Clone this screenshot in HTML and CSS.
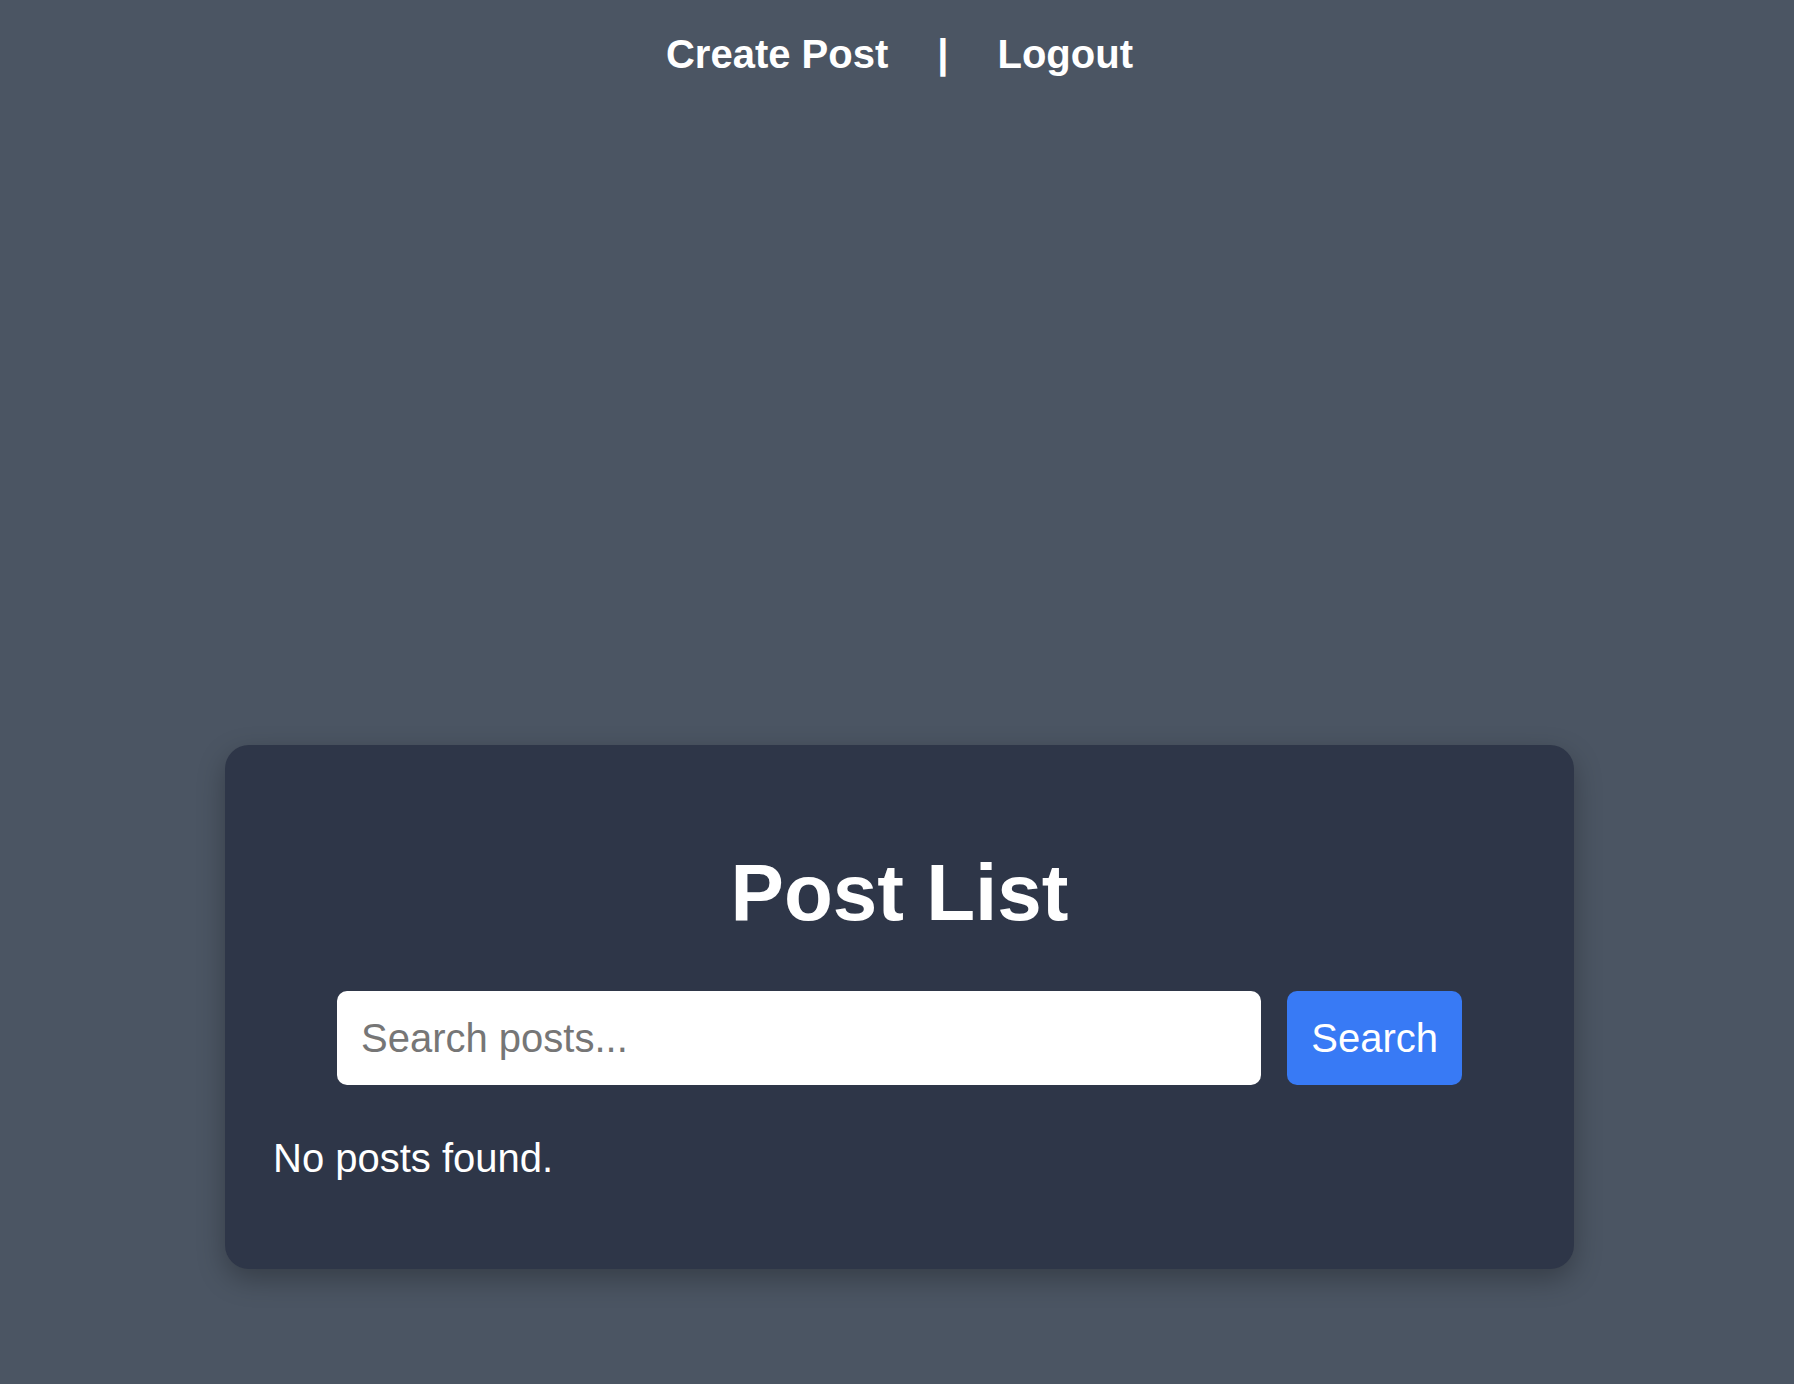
FILE: index.html
```html
<!DOCTYPE html>
<html lang="en">
<head>
<meta charset="utf-8">
<title>Post List</title>
<link rel="stylesheet" href="styles.css">
</head>
<body>
  <nav class="topnav">
    <a href="#" class="navlink">Create Post</a>
    <span class="sep">|</span>
    <a href="#" class="navlink">Logout</a>
  </nav>
  <main class="main">
    <section class="card">
      <h1 class="title">Post List</h1>
      <form class="search" onsubmit="return false;">
        <input class="search-input" type="text" placeholder="Search posts...">
        <button class="search-btn" type="submit">Search</button>
      </form>
      <p class="empty">No posts found.</p>
    </section>
  </main>
</body>
</html>
```

FILE: styles.css
```css
html, body {
  margin: 0;
  padding: 0;
}

body {
  background: #4b5563;
  font-family: "Liberation Sans", Arial, sans-serif;
  color: #ffffff;
  min-height: 1384px;
  padding-left: 5px;
  box-sizing: border-box;
}

.topnav {
  display: flex;
  justify-content: center;
  align-items: center;
  gap: 49px;
  padding-top: 32px;
  font-size: 40px;
  font-weight: bold;
  line-height: normal;
}

.navlink {
  color: #ffffff;
  text-decoration: none;
}

.sep {
  color: #ffffff;
  font-weight: bold;
}

.main {
  display: flex;
  justify-content: center;
  padding-top: 668px;
}

.card {
  width: 1349px;
  box-sizing: border-box;
  padding: 48px;
  background: #2e3648;
  border-radius: 24px;
  box-shadow: 0 10px 28px rgba(0, 0, 0, 0.28);
}

.title {
  margin: 54px 0 52px;
  font-size: 80px;
  font-weight: bold;
  text-align: center;
  line-height: normal;
}

.search {
  display: flex;
  gap: 26px;
  width: 1125px;
  margin: 0 auto;
}

.search-input {
  flex: 1;
  min-width: 0;
  border: none;
  outline: none;
  border-radius: 10px;
  background: #ffffff;
  padding: 24px;
  font-family: "Liberation Sans", Arial, sans-serif;
  font-size: 40px;
  line-height: normal;
  height: 94px;
  box-sizing: border-box;
  color: #222;
}

.search-input::placeholder {
  color: #767676;
}

.search-btn {
  border: none;
  border-radius: 10px;
  background: #387af5;
  color: #ffffff;
  padding: 0 24px;
  height: 94px;
  font-family: "Liberation Sans", Arial, sans-serif;
  font-size: 40px;
  cursor: pointer;
}

.empty {
  margin: 51px 0 40px;
  font-size: 40px;
  line-height: normal;
}
```
